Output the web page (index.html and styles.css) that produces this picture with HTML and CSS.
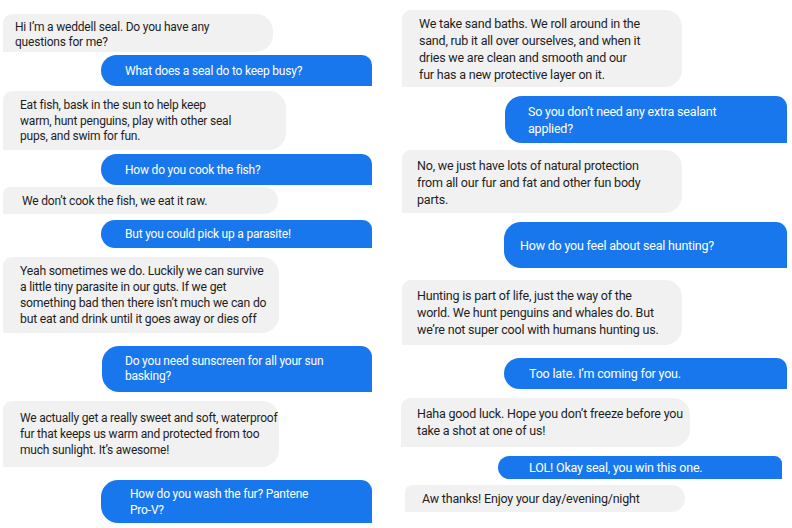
FILE: index.html
```html
<!DOCTYPE html>
<html>
<head>
<meta charset="utf-8">
<link rel="stylesheet" href="styles.css">
</head>
<body>
<div class="page">
  <div class="col col-left">
    <div class="msg in l1"><p>Hi I’m a weddell seal. Do you have any<br>questions for me?</p></div>
    <div class="msg out l2"><p>What does a seal do to keep busy?</p></div>
    <div class="msg in l3"><p>Eat fish, bask in the sun to help keep<br>warm, hunt penguins, play with other seal<br>pups, and swim for fun.</p></div>
    <div class="msg out l4"><p>How do you cook the fish?</p></div>
    <div class="msg in l5"><p>We don’t cook the fish, we eat it raw.</p></div>
    <div class="msg out l6"><p>But you could pick up a parasite!</p></div>
    <div class="msg in l7"><p>Yeah sometimes we do. Luckily we can survive<br>a little tiny parasite in our guts. If we get<br>something bad then there isn’t much we can do<br>but eat and drink until it goes away or dies off</p></div>
    <div class="msg out l8"><p>Do you need sunscreen for all your sun<br>basking?</p></div>
    <div class="msg in l9"><p>We actually get a really sweet and soft, waterproof<br>fur that keeps us warm and protected from too<br>much sunlight. It’s awesome!</p></div>
    <div class="msg out l10"><p>How do you wash the fur? Pantene<br>Pro-V?</p></div>
  </div>
  <div class="col col-right">
    <div class="msg in r1"><p>We take sand baths. We roll around in the<br>sand, rub it all over ourselves, and when it<br>dries we are clean and smooth and our<br>fur has a new protective layer on it.</p></div>
    <div class="msg out r2"><p>So you don’t need any extra sealant<br>applied?</p></div>
    <div class="msg in r3"><p>No, we just have lots of natural protection<br>from all our fur and fat and other fun body<br>parts.</p></div>
    <div class="msg out r4"><p>How do you feel about seal hunting?</p></div>
    <div class="msg in r5"><p>Hunting is part of life, just the way of the<br>world. We hunt penguins and whales do. But<br>we’re not super cool with humans hunting us.</p></div>
    <div class="msg out r6"><p>Too late. I’m coming for you.</p></div>
    <div class="msg in r7"><p>Haha good luck. Hope you don’t freeze before you<br>take a shot at one of us!</p></div>
    <div class="msg out r8"><p>LOL! Okay seal, you win this one.</p></div>
    <div class="msg in r9"><p>Aw thanks! Enjoy your day/evening/night</p></div>
  </div>
</div>
</body>
</html>
```

FILE: styles.css
```css
html, body {
  margin: 0;
  padding: 0;
  background: #ffffff;
}

.page {
  display: flex;
  width: 792px;
  height: 528px;
  overflow: hidden;
  font-family: Roboto, "Liberation Sans", sans-serif;
  letter-spacing: -0.2px;
}

.col {
  display: flex;
  flex-direction: column;
  align-items: flex-start;
}

.col-left {
  width: 395px;
  font-size: 12px;
  line-height: 16px;
}

.col-right {
  width: 397px;
  font-size: 12.5px;
  line-height: 17px;
}

.msg {
  display: flex;
  align-items: center;
  box-sizing: border-box;
  flex-shrink: 0;
}

.msg p {
  margin: 0;
  white-space: nowrap;
}

.in {
  background: #f1f1f2;
  color: #1e1e1e;
  border-radius: 9px 17px 17px 0;
}

.out {
  background: #1877ec;
  color: #ffffff;
  border-radius: 17px 11px 0 17px;
}

/* left column */
.l1 { margin: 14px 0 0 3px; width: 270px; height: 38px; padding-left: 12px; padding-top: 3px; line-height: 15px; }
.l2 { margin: 3px 0 0 101px; width: 271px; height: 31px; padding-left: 24px; }
.l3 { margin: 5px 0 0 3px; width: 283px; height: 59px; padding-left: 17px; padding-top: 2px; line-height: 15.5px; }
.l4 { margin: 4px 0 0 101px; width: 271px; height: 31px; padding-left: 24px; }
.l5 { margin: 2px 0 0 3px; width: 275px; height: 27px; padding-left: 19px; }
.l6 { margin: 6px 0 0 101px; width: 271px; height: 28px; padding-left: 24px; }
.l7 { margin: 9px 0 0 3px; width: 276px; height: 76px; padding-left: 17px; font-size: 12.2px; }
.l8 { margin: 13px 0 0 102px; width: 270px; height: 46px; padding-left: 23px; line-height: 15.5px; }
.l9 { margin: 9px 0 0 3px; width: 276px; height: 66px; padding-left: 17px; }
.l10 { margin: 13px 0 0 101px; width: 271px; height: 43px; padding-left: 29px; }

/* right column */
.r1 { margin: 10px 0 0 7px; width: 280px; height: 77px; padding-left: 17px; }
.r2 { margin: 9px 0 0 110px; width: 282px; height: 47px; padding-left: 23px; }
.r3 { margin: 7px 0 0 7px; width: 280px; height: 63px; padding-left: 15px; padding-top: 2px; }
.r4 { margin: 9px 0 0 109px; width: 283px; height: 46px; padding-left: 16px; }
.r5 { margin: 12px 0 0 7px; width: 280px; height: 65px; padding-left: 15px; }
.r6 { margin: 13px 0 0 109px; width: 283px; height: 31px; padding-left: 25px; }
.r7 { margin: 9px 0 0 6px; width: 289px; height: 49px; padding-left: 16px; line-height: 16.5px; }
.r8 { margin: 9px 0 0 103px; width: 284px; height: 23px; padding-left: 31px; }
.r9 { margin: 6px 0 0 10px; width: 280px; height: 27px; padding-left: 17px; }
```
